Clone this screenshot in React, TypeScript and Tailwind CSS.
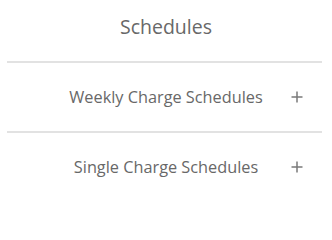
import React from "react";

const rows = ["Weekly Charge Schedules", "Single Charge Schedules"];

function Plus() {
  return (
    <svg width="12" height="12" viewBox="0 0 12 12" className="text-[#7a7a7a]">
      <path d="M6 0.5v11M0.5 6h11" stroke="currentColor" strokeWidth="1.5" />
    </svg>
  );
}

export default function App() {
  return (
    <div
      className="w-[332px] h-[204px] bg-white text-[#686868] overflow-hidden"
      style={{ fontFamily: '"Open Sans", sans-serif' }}
    >
      <div className="h-[61px] flex items-center justify-center">
        <h1 className="text-[19.5px] leading-none pb-[8px]">Schedules</h1>
      </div>
      {rows.map((label) => (
        <div key={label}>
          <div className="h-[2px] bg-[#e2e2e2] ml-[7px] mr-[10px]" />
          <div className="relative h-[68px] flex items-center justify-center">
            <span className="text-[16.3px] leading-none">{label}</span>
            <span className="absolute right-[29px] top-1/2 -translate-y-1/2 flex">
              <Plus />
            </span>
          </div>
        </div>
      ))}
    </div>
  );
}
